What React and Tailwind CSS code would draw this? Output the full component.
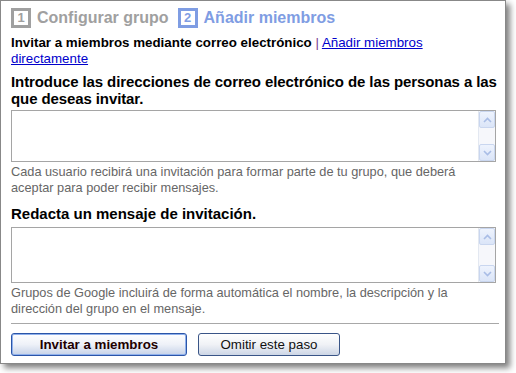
import React from 'react';

const Arrow = ({ down }) => (
    <svg width="9" height="6" viewBox="0 0 9 6" className={down ? 'rotate-180' : ''}>
        <path d="M1 5 L4.5 1.5 L8 5" fill="none" stroke="#a9bde6" strokeWidth="1.6" />
    </svg>
);

// fake XP-style textarea with a disabled scrollbar
const TextBox = ({ height }) => (
    <div className={`flex w-[485px] border border-[#a5a5a5] bg-white ${height}`}>
        <div className="flex-1" />
        <div className="flex w-[17px] flex-col justify-between border-l border-[#e3e8f1] bg-[#f6f7fb]">
            <div className="flex h-[17px] items-center justify-center rounded-[2px] border border-[#c9d6ef] bg-gradient-to-b from-[#eef3fd] to-[#dbe5f8]">
                <Arrow />
            </div>
            <div className="flex h-[17px] items-center justify-center rounded-[2px] border border-[#c9d6ef] bg-gradient-to-b from-[#eef3fd] to-[#dbe5f8]">
                <Arrow down />
            </div>
        </div>
    </div>
);

const App = () => {
    return (
        <div className="h-[373px] w-[516px] bg-white font-['Liberation_Sans',Arial,sans-serif]">
            <div className="h-[364px] w-[506px] border border-[#888] bg-white pl-[10px] pr-[6px] pt-[7px] shadow-[4px_4px_6px_rgba(0,0,0,0.5)]">
                {/* Steps */}
                <div className="flex h-[20px] items-center">
                    <div className="flex h-[20px] w-[20px] items-center justify-center border-[3px] border-[#a0a0a0] text-[13px] font-bold text-[#a0a0a0]">1</div>
                    <span className="ml-[6px] text-[16px] font-bold text-[#a0a0a0]">Configurar grupo</span>
                    <div className="ml-[9px] flex h-[20px] w-[20px] items-center justify-center border-[3px] border-[#7f9de3] text-[13px] font-bold text-[#7f9de3]">2</div>
                    <span className="ml-[6px] text-[16px] font-bold text-[#7f9de3]">Añadir miembros</span>
                </div>

                <p className="mt-[7px] text-[13.33px] leading-[16px] text-black">
                    <span className="font-bold">Invitar a miembros mediante correo electrónico</span>{' '}
                    <span className="text-[#7a3a8a]">|</span>{' '}
                    <a href="#" className="text-[#0000cc] underline">Añadir miembros directamente</a>
                </p>

                <h2 className="mr-[-6px] mt-[6px] text-[15px] font-bold leading-[17px] tracking-[-0.1px] text-black">
                    Introduce las direcciones de correo electrónico de las personas a las que deseas invitar.
                </h2>
                <div className="mt-[3px]">
                    <TextBox height="h-[52px]" />
                </div>
                <p className="mt-[2px] text-[12.75px] leading-[16px] text-[#666]">
                    Cada usuario recibirá una invitación para formar parte de tu grupo, que deberá aceptar para poder recibir mensajes.
                </p>

                <h2 className="mt-[9px] text-[15px] font-bold leading-[17px] text-black">Redacta un mensaje de invitación.</h2>
                <div className="mt-[5px]">
                    <TextBox height="h-[56px]" />
                </div>
                <p className="mt-[2px] text-[12.75px] leading-[16px] text-[#666]">
                    Grupos de Google incluirá de forma automática el nombre, la descripción y la dirección del grupo en el mensaje.
                </p>

                <div className="mt-[6px] h-px bg-[#a8a8a8]" />

                <div className="mt-[9px] flex gap-[11px]">
                    <button className="h-[23px] w-[176px] rounded-[3px] border border-[#2b55a8] bg-gradient-to-b from-white via-[#eef1f8] to-[#c6d2e8] text-[13.33px] font-bold text-[#200] shadow-[inset_0_0_0_1px_#8fb0ec]">
                        Invitar a miembros
                    </button>
                    <button className="h-[23px] w-[142px] rounded-[3px] border border-[#3a5587] bg-gradient-to-b from-white via-[#f0f2f6] to-[#cdd6e6] text-[13.33px] text-[#111]">
                        Omitir este paso
                    </button>
                </div>
            </div>
        </div>
    );
};

export default App;
